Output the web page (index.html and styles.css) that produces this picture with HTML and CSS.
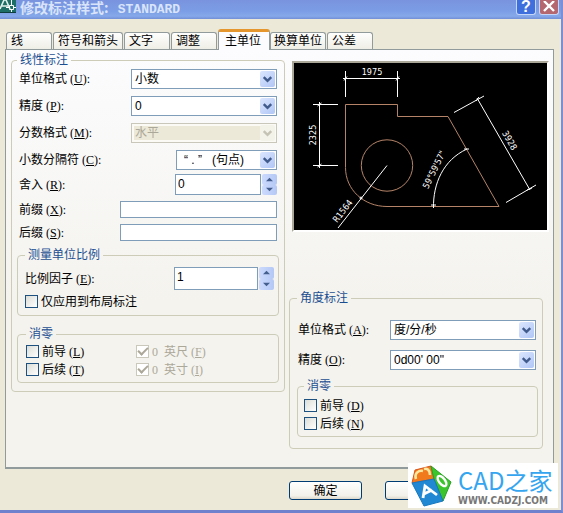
FILE: index.html
```html
<!DOCTYPE html>
<html lang="zh-CN">
<head>
<meta charset="utf-8">
<title>修改标注样式: STANDARD</title>
<link rel="stylesheet" href="styles.css">
</head>
<body>
<svg class="defs" width="0" height="0" aria-hidden="true">
  <symbol id="chevron" viewBox="0 0 16 16"><path d="M4 6l4 4 4-4" fill="none" stroke="currentColor" stroke-width="2.6"/></symbol>
  <symbol id="up" viewBox="0 0 8 5"><path d="M0 4.5L4 0.5l4 4z" fill="currentColor"/></symbol>
  <symbol id="down" viewBox="0 0 8 5"><path d="M0 0.5L4 4.5l4-4z" fill="currentColor"/></symbol>
</svg>
<div class="dialog">
  <header class="titlebar">
    <svg class="app-icon" width="16" height="13" viewBox="0 0 16 13" aria-hidden="true">
      <path d="M0 0h16v13H0z" fill="#1d6f66"/>
      <path d="M0 9L4 0h2l4 9M2 6h6" fill="none" stroke="#dff0ea" stroke-width="1.6"/>
      <path d="M11.500 0v5M11.500 9v3M6 7.500h3M13 7.500h3M9.500 5.500h4v4h-4z" fill="none" stroke="#fff"/>
      <path d="M0 12.5h16" stroke="#0e3f3e"/>
    </svg>
    <h1 class="title">修改标注样式: <span class="title-latin">STANDARD</span></h1>
    <button class="caption-btn help" type="button" aria-label="帮助">?</button>
    <button class="caption-btn close" type="button" aria-label="关闭"><svg width="12" height="11" viewBox="0 0 12 11"><path d="M1 0l10 10M11 0L1 10" stroke="#fff" stroke-width="2.4"/></svg></button>
  </header>

  <main class="content">
    <nav class="tabs" role="tablist">
      <button class="tab short" role="tab" type="button">线</button>
      <button class="tab long" role="tab" type="button">符号和箭头</button>
      <button class="tab short" role="tab" type="button">文字</button>
      <button class="tab short" role="tab" type="button">调整</button>
      <button class="tab active" role="tab" type="button" aria-selected="true">主单位</button>
      <button class="tab mid" role="tab" type="button">换算单位</button>
      <button class="tab short" role="tab" type="button">公差</button>
    </nav>

    <section class="panel">
      <fieldset class="group linear">
        <legend>线性标注</legend>
        <div class="rows">
          <div class="row"><label for="lu">单位格式<span class="key"> (<u>U</u>):</span></label>
            <span class="combo"><select id="lu"><option>小数</option></select><svg class="arrow"><use href="#chevron"/></svg></span></div>
          <div class="row"><label for="lp">精度<span class="key"> (<u>P</u>):</span></label>
            <span class="combo"><select id="lp"><option>0</option></select><svg class="arrow"><use href="#chevron"/></svg></span></div>
          <div class="row"><label for="lf">分数格式<span class="key"> (<u>M</u>):</span></label>
            <span class="combo off"><select id="lf" disabled><option>水平</option></select><svg class="arrow"><use href="#chevron"/></svg></span></div>
          <div class="row"><label for="ls">小数分隔符<span class="key"> (<u>C</u>):</span></label>
            <span class="combo narrow"><select id="ls"><option>“ . ” &nbsp; (句点)</option></select><svg class="arrow"><use href="#chevron"/></svg></span></div>
        </div>
        <div class="rows fields">
          <div class="row"><label for="lr">舍入<span class="key"> (<u>R</u>):</span></label>
            <span class="spin"><input id="lr" type="text" value="0"><span class="steps"><button type="button" aria-label="增加"><svg><use href="#up"/></svg></button><button type="button" aria-label="减少"><svg><use href="#down"/></svg></button></span></span></div>
          <div class="row"><label for="lx">前缀<span class="key"> (<u>X</u>):</span></label><input class="affix" id="lx" type="text"></div>
          <div class="row"><label for="ly">后缀<span class="key"> (<u>S</u>):</span></label><input class="affix" id="ly" type="text"></div>
        </div>

        <fieldset class="group scale">
          <legend>测量单位比例</legend>
          <div class="row"><label for="lc">比例因子<span class="key"> (<u>E</u>):</span></label>
            <span class="spin tall"><input id="lc" type="text" value="1"><span class="steps"><button type="button" aria-label="增加"><svg><use href="#up"/></svg></button><button type="button" aria-label="减少"><svg><use href="#down"/></svg></button></span></span></div>
          <label class="check"><input type="checkbox">仅应用到布局标注</label>
        </fieldset>

        <fieldset class="group zeros">
          <legend>消零</legend>
          <div class="checks">
            <label class="check"><input type="checkbox">前导<span class="key"> (<u>L</u>)</span></label>
            <label class="check off"><input type="checkbox" checked disabled><span class="key">0  </span>英尺<span class="key"> (<u>F</u>)</span></label>
            <label class="check"><input type="checkbox">后续<span class="key"> (<u>T</u>)</span></label>
            <label class="check off"><input type="checkbox" checked disabled><span class="key">0  </span>英寸<span class="key"> (<u>I</u>)</span></label>
          </div>
        </fieldset>
      </fieldset>

      <div class="side">
        <div class="preview">
          <svg viewBox="4 3 253 167" role="img" aria-label="预览">
            <g class="shape">
              <path d="M55.5 44.5H107.5V56.5H158L209 146.5H97C74 146.500 55.500 130 55.500 107.500Z"/>
              <circle cx="97" cy="105.500" r="25.700"/>
            </g>
            <g class="dims">
              <path d="M55.500 11V37M107.500 11V37M53 18.500H110M54 20.500l3-4M106 20.500l3-4"/>
              <path d="M23 44.500H48M23 105.500H48M29.500 42V108M27.500 46l4-3M27.500 107l4-3"/>
              <path d="M164 52.500L194 36M216 142.500L246 125M187 38L240 130M186 41l3-4M237 130l5-2"/>
              <path d="M97 105.500L48 168"/>
              <path d="M143.500 148C143 124 153 100 177 89M141 145h5M174 89h5"/>
              <circle cx="71" cy="138" r="1"/>
            </g>
            <g class="dim-text">
              <text x="82" y="15">1975</text>
              <text transform="translate(26 75) rotate(-90)">2325</text>
              <text transform="translate(217 82) rotate(60)">3928</text>
              <text transform="translate(147 111) rotate(-64)">59°59'57"</text>
              <text transform="translate(55 153) rotate(-52)">R1564</text>
            </g>
          </svg>
        </div>

        <fieldset class="group angular">
          <legend>角度标注</legend>
          <div class="rows">
            <div class="row"><label for="au">单位格式<span class="key"> (<u>A</u>):</span></label>
              <span class="combo"><select id="au"><option>度/分/秒</option></select><svg class="arrow"><use href="#chevron"/></svg></span></div>
            <div class="row"><label for="ap">精度<span class="key"> (<u>O</u>):</span></label>
              <span class="combo"><select id="ap"><option>0d00' 00"</option></select><svg class="arrow"><use href="#chevron"/></svg></span></div>
          </div>
          <fieldset class="group zeros">
            <legend>消零</legend>
            <div class="checks">
              <label class="check"><input type="checkbox">前导<span class="key"> (<u>D</u>)</span></label>
              <label class="check"><input type="checkbox">后续<span class="key"> (<u>N</u>)</span></label>
            </div>
          </fieldset>
        </fieldset>
      </div>
    </section>

    <footer class="actions">
      <button class="push" type="button">确定</button>
      <button class="push" type="button" aria-label="取消"></button>
    </footer>
  </main>

  <div class="brand">
    <svg width="42" height="42" viewBox="0 0 42 42" aria-hidden="true">
      <path d="M1 18L4 5 20 1 23 14Z" fill="#f07a1c" stroke="#d9541a"/>
      <path d="M20 1L40 17 32 36 23 14Z" fill="#3cc42c" stroke="#27a024"/>
      <path d="M1 18L23 14 32 36 13 41Z" fill="#2189d4" stroke="#1878c0"/>
      <path d="M5 14C3 8 8 5 12 6M19 10C19 5 16 3 13 4" fill="none" stroke="#ffe9a0" stroke-width="2.600"/>
      <ellipse cx="31" cy="16" rx="3" ry="6" transform="rotate(-38 31 16)" fill="none" stroke="#fff" stroke-width="2.400"/>
      <path d="M12 33L14 21 26 30M13 29L21 25" fill="none" stroke="#fff" stroke-width="2.800"/>
    </svg>
    <div class="brand-text"><span class="brand-name">CAD之家</span><span class="brand-url">WWW.CADZJ.COM</span></div>
  </div>
</div>
</body>
</html>
```
FILE: styles.css
```css
* { box-sizing: border-box; }

body {
  margin: 0;
  background: #ece9d8;
  color: #000;
  font: 12px/14px "Liberation Sans", "Noto Sans CJK SC", sans-serif;
  overflow: hidden;
}

button, input, select { font: inherit; color: inherit; margin: 0; padding: 0; }

.defs { position: absolute; }

.dialog {
  position: relative;
  display: flex;
  flex-direction: column;
  min-height: 100vh;
  border-right: 2px solid #7b8ed6;
  border-bottom: 3px solid #6f80cc;
}

/* Title bar */
.titlebar {
  display: flex;
  align-items: flex-start;
  height: 19px;
  padding-right: 2px;
  background: linear-gradient(#7a93df, #7b9ee6 60%, #86a9ea 85%, #718fd6);
}
.app-icon { flex: none; margin-right: 4px; }
.title {
  flex: 1;
  margin: 0;
  color: #d9e4fa;
  font: bold 14px/14px "Noto Sans CJK SC", sans-serif;
  white-space: pre;
}
.title-latin { margin-left: 6px; font: bold 13px/13px "Liberation Mono", monospace; }
.caption-btn {
  display: flex;
  align-items: flex-end;
  justify-content: center;
  width: 20px;
  height: 15px;
  margin-left: 3px;
  border: 1px solid #c6d6f8;
  border-top: 0;
  border-radius: 0 0 3px 3px;
  color: #fff;
}
.help { background: #3f6fdc; font: bold 16px/15px "Liberation Sans", sans-serif; }
.close { background: #b5676f; padding-bottom: 2px; }

.content { flex: 1; padding: 11px 7px 0 5px; }

/* Tabs */
.tabs { display: flex; align-items: flex-end; height: 19px; padding: 0 1px; }
.tab {
  height: 17px;
  margin-right: 1px;
  padding: 0 4px;
  border: 1px solid #919b9c;
  border-bottom: 0;
  border-radius: 3px 3px 0 0;
  background: linear-gradient(#fefefe, #efeee6);
  text-align: left;
  white-space: nowrap;
  line-height: 16px;
}
.tab.short { width: 46px; }
.tab.long { width: 70px; }
.tab.mid { width: 56px; padding: 0 3px; }
.tab.active {
  position: relative;
  width: 52px;
  height: 21px;
  margin: 0 0 -1px;
  padding: 0 6px;
  border-top: 3px solid #e5972d;
  background: #fcfcfe;
  line-height: 13px;
}

/* Tab page */
.panel {
  display: grid;
  grid-template-columns: 274fr 260fr;
  gap: 4px;
  padding: 3px 4px 18px 5px;
  border: 1px solid #919b9c;
  border-bottom: 2px solid #919b9c;
  background: linear-gradient(#fcfcfe, #f4f3ee 60%);
}
.group {
  min-width: 0;
  margin: 0;
  padding: 0 5px;
  border: 1px solid #cdccb8;
  border-radius: 4px;
}
legend { padding: 0 3px; color: #1c4f91; line-height: 14px; }
.linear { align-self: start; padding-bottom: 8px; }
.rows { display: grid; gap: 7px; padding: 2px 2px 0; }
.rows.fields { gap: 6px; padding-top: 4px; }
.row { display: flex; align-items: center; justify-content: space-between; white-space: nowrap; }
.key { font: 12px/14px "Liberation Serif", serif; white-space: pre; }

input[type="text"] {
  min-width: 0;
  border: 1px solid #7f9db9;
  border-radius: 0;
  background: #fff;
  font: 12px/14px "Liberation Sans", sans-serif;
}
.affix { width: 157px; height: 17px; }

.combo { position: relative; display: block; width: 146px; height: 20px; }
.combo.narrow { width: 101px; }
.combo select {
  width: 100%;
  height: 100%;
  padding-left: 3px;
  appearance: none;
  border: 1px solid #7f9db9;
  border-radius: 0;
  background: #fff;
  opacity: 1;
}
.combo.narrow select { padding-left: 7px; }
.arrow {
  position: absolute;
  top: 2px;
  right: 2px;
  width: 15px;
  height: 16px;
  border-radius: 2px;
  background: linear-gradient(135deg, #dbe6fe, #b0c6f6);
  color: #415c8c;
  pointer-events: none;
}
.combo.off select { border-color: #c9c7ba; box-shadow: inset 0 0 0 2px #fbfaf5; background: #ece9d8; color: #aca899; }
.combo.off .arrow { background: #f4f3ea; color: #c5c3b4; }

.spin { display: flex; gap: 1px; width: 102px; height: 21px; }
.spin input { flex: 1; padding: 0 2px 2px; }
.spin.tall { width: 100px; height: 23px; }
.spin.tall input { padding-bottom: 4px; }
.steps { display: flex; flex-direction: column; width: 15px; }
.steps button {
  display: flex;
  flex: 1;
  align-items: center;
  justify-content: center;
  min-height: 0;
  border: 0;
  border-radius: 2px;
  background: linear-gradient(90deg, #ccdafc, #b4c8f6);
  color: #445e8e;
}
.steps svg { width: 7px; height: 5px; }

.scale { margin-top: 7px; padding: 5px 4px 7px 7px; }
.scale .check { margin-top: 5px; }
.linear .zeros { margin-top: 11px; padding: 4px 8px 6px; }

.check { display: flex; align-items: center; height: 13px; white-space: nowrap; }
.checks { display: grid; grid-template-columns: 110px 1fr; row-gap: 5px; }
.check input {
  flex: none;
  display: grid;
  place-items: center;
  width: 13px;
  height: 13px;
  margin-right: 3px;
  appearance: none;
  border: 1px solid #1c5180;
  background: linear-gradient(135deg, #dcdcd7, #fff);
}
.check.off { color: #aca899; }
.check.off input { border-color: #cac8bb; background: #fff; }
.check input:checked::before {
  content: "";
  width: 8px;
  height: 4px;
  margin-bottom: 3px;
  border: solid #aca899;
  border-width: 0 0 2px 2px;
  transform: rotate(-45deg);
}

/* Preview and angular group */
.side { padding-top: 8px; }
.preview {
  margin-left: 3px;
  border: 2px solid #fff;
  border-top-color: #aca899;
  border-left-color: #aca899;
  background: #000;
}
.preview svg { display: block; width: 100%; }
.shape { fill: none; stroke: #b58468; }
.dims { fill: none; stroke: #fff; }
.dim-text { fill: #fff; font: 9px "DejaVu Sans Condensed", "Liberation Sans", sans-serif; text-anchor: middle; }
.angular { margin: 59px 6px 0 0; padding: 0 4px 11px 7px; }
.angular .rows { gap: 10px; padding: 15px 2px 0 1px; }
.angular .zeros { margin-top: 9px; padding: 6px 6px; }
.angular .checks { grid-template-columns: 1fr; }

/* Buttons */
.actions { display: flex; justify-content: flex-end; gap: 23px; padding: 12px 96px 0 0; }
.push {
  width: 73px;
  height: 19px;
  border: 1px solid #003c74;
  border-radius: 3px;
  background: linear-gradient(#fff, #f2f1ea 80%, #dcd8cc);
}

/* Site mark over the lower right corner */
.brand {
  position: absolute;
  right: 3px;
  bottom: 2px;
  display: flex;
  align-items: center;
  gap: 5px;
  width: 150px;
  height: 45px;
  padding-left: 3px;
  background: #fff;
}
.brand svg { flex: none; }
.brand-text { display: flex; flex-direction: column; white-space: nowrap; }
.brand-name { color: #36a5f0; font: 24px/30px "Noto Sans CJK SC", sans-serif; }
.brand-url { color: #777; font: bold 10px/12px "DejaVu Sans Condensed", "Liberation Sans", sans-serif; }
```
